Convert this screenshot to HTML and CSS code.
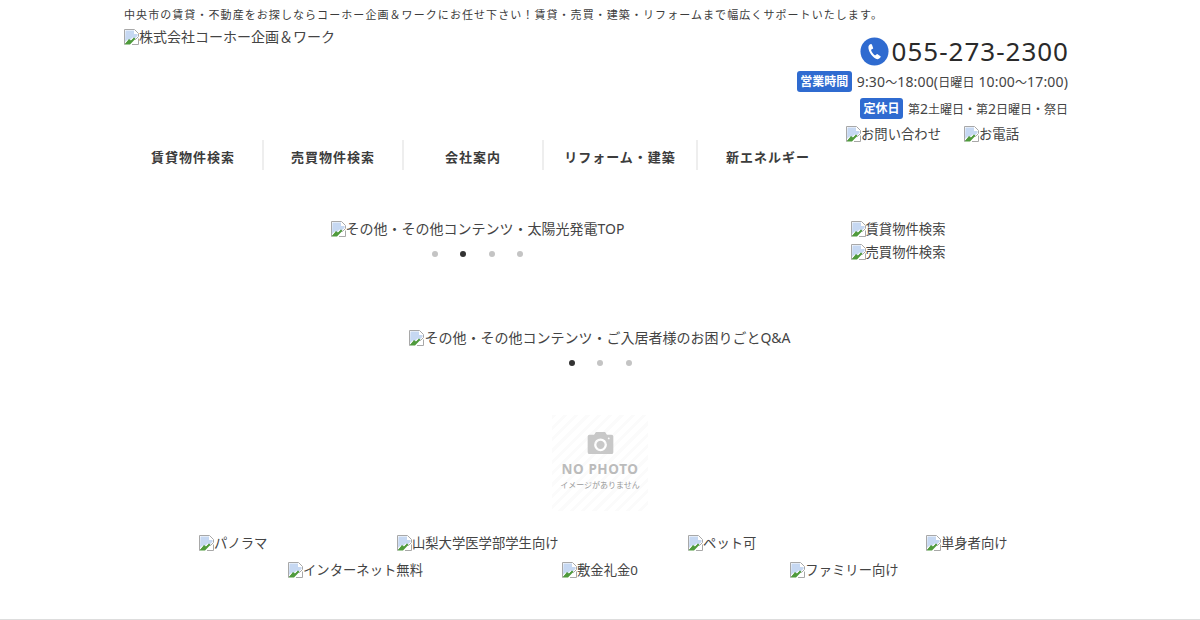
FILE: index.html
```html
<!DOCTYPE html>
<html lang="ja">
<head>
<meta charset="utf-8">
<title>株式会社コーホー企画＆ワーク</title>
<link rel="stylesheet" href="styles.css">
</head>
<body>
<svg class="defs" width="0" height="0" aria-hidden="true">
  <symbol id="broken" viewBox="0 0 16 16">
    <path d="M.5.5h10l4 4v3l-3 3-2-1-3 3-2-1-4 4z" fill="#fff" stroke="#a8a8a8"/>
    <path d="M1.500 1.500h8.500v3.500h3.500v2l-3 2.600-2-1-3 3-2-1-2.500 2.500z" fill="#c6d8f2"/>
    <path d="M1 15l4-5 2 1.500 3-3 1.500 1.200L6 15.500H1z" fill="#4f9b3c"/>
    <path d="M14.500 9.500v6H8" fill="none" stroke="#a8a8a8"/>
  </symbol>
</svg>
<header class="header">
  <h1 class="tagline">中央市の賃貸・不動産をお探しならコーホー企画＆ワークにお任せ下さい！賃貸・売買・建築・リフォームまで幅広くサポートいたします。</h1>
  <div class="head-main">
    <a class="alt logo"><svg class="bi"><use href="#broken"/></svg>株式会社コーホー企画＆ワーク</a>
    <div class="contact">
      <div class="tel">
        <svg class="tel-icon" viewBox="0 0 30 30"><circle cx="15" cy="15" r="14.500" fill="#2f6bd0"/><path d="M11.300 7.200c-.7.100-2.400 1.200-2.600 3-.3 2.800 1.400 6 3 8.200 1.700 2.300 4.500 4.700 6.700 4.500 1.300-.1 2.700-1.400 3-2.100.1-.3.100-.6-.2-.8l-3-2.200c-.3-.2-.6-.2-.9 0l-1.300 1c-.3.200-.5.200-.8 0-1.600-1.300-3-3.200-3.700-5.200-.1-.3 0-.5.300-.7l1.500-.8c.3-.2.400-.5.300-.8l-1.300-3.600c-.1-.3-.4-.5-1-.5z" fill="#fff"/></svg>
        <span class="tel-num">055-273-2300</span>
      </div>
      <div class="info"><span class="badge">営業時間</span><span class="hours">9:30<span class="cj">〜</span>18:00(<span class="cj">日曜日</span> 10:00<span class="cj">〜</span>17:00)</span></div>
      <div class="info"><span class="badge">定休日</span><span><span class="cj">第</span>2<span class="cj">土曜日・第</span>2<span class="cj">日曜日・祭日</span></span></div>
      <div class="mini">
        <a class="alt"><svg class="bi"><use href="#broken"/></svg>お問い合わせ</a>
        <a class="alt"><svg class="bi"><use href="#broken"/></svg>お電話</a>
      </div>
    </div>
  </div>
  <nav class="nav">
    <a class="cell">賃貸物件検索</a>
    <a class="cell">売買物件検索</a>
    <a class="cell">会社案内</a>
    <a class="cell wide">リフォーム・建築</a>
    <a class="cell last">新エネルギー</a>
  </nav>
</header>
<main>
  <section class="hero">
    <div class="slider">
      <a class="alt"><svg class="bi"><use href="#broken"/></svg>その他・その他コンテンツ・太陽光発電TOP</a>
      <div class="dots"><i></i><i class="on"></i><i></i><i></i></div>
    </div>
    <div class="side">
      <a class="alt"><svg class="bi"><use href="#broken"/></svg>賃貸物件検索</a>
      <a class="alt"><svg class="bi"><use href="#broken"/></svg>売買物件検索</a>
    </div>
  </section>
  <section class="slider second">
    <a class="alt"><svg class="bi"><use href="#broken"/></svg>その他・その他コンテンツ・ご入居者様のお困りごとQ&amp;A</a>
    <div class="dots"><i class="on"></i><i></i><i></i></div>
  </section>
  <section class="nophoto-wrap">
    <div class="nophoto">
      <svg class="camera" viewBox="0 0 28 24"><path fill-rule="evenodd" d="M2 3h5l2-3h10l2 3h5a2 2 0 0 1 2 2v17a2 2 0 0 1-2 2H2a2 2 0 0 1-2-2V5a2 2 0 0 1 2-2zm12 4a7 7 0 1 0 0 14 7 7 0 0 0 0-14zm0 2.500a4.500 4.500 0 1 1 0 9 4.500 4.500 0 0 1 0-9zM23 6a1 1 0 1 0 0 2 1 1 0 0 0 0-2z" fill="#c8c8c8"/></svg>
      <span class="np-title">NO PHOTO</span>
      <span class="np-sub">イメージがありません</span>
    </div>
  </section>
  <section class="tags">
    <a class="alt tag"><svg class="bi"><use href="#broken"/></svg>パノラマ</a>
    <a class="alt tag"><svg class="bi"><use href="#broken"/></svg>山梨大学医学部学生向け</a>
    <a class="alt tag"><svg class="bi"><use href="#broken"/></svg>ペット可</a>
    <a class="alt tag"><svg class="bi"><use href="#broken"/></svg>単身者向け</a>
    <a class="alt tag"><svg class="bi"><use href="#broken"/></svg>インターネット無料</a>
    <a class="alt tag"><svg class="bi"><use href="#broken"/></svg>敷金礼金0</a>
    <a class="alt tag"><svg class="bi"><use href="#broken"/></svg>ファミリー向け</a>
  </section>
</main>
<footer class="foot"></footer>
</body>
</html>
```

FILE: styles.css
```css
* { box-sizing: border-box; }
html, body { margin: 0; padding: 0; }
body {
  height: 620px;
  overflow: hidden;
  background: #fff;
  color: #3c3c3c;
  font-family: "Noto Sans", "Noto Sans CJK JP", sans-serif;
  font-size: 14px;
  display: flex;
  flex-direction: column;
}
.defs { position: absolute; }
.alt { display: inline-block; line-height: 20px; white-space: nowrap; color: #444; }
.bi { width: 16px; height: 16px; vertical-align: -3px; margin-right: -1px; }
.header { width: 944px; margin-left: 124px; }
.tagline { margin: 0; font-size: 11px; font-weight: 400; letter-spacing: 1.07px; line-height: 16px; padding-top: 7px; height: 23px; white-space: nowrap; color: #3c3c3c; }
.head-main { display: flex; justify-content: space-between; align-items: flex-start; }
.logo { margin-top: 4px; }
.contact { display: flex; flex-direction: column; align-items: flex-end; padding-top: 14px; }
.tel { display: flex; align-items: center; gap: 3px; height: 30px; margin-right: -1px; }
.tel-icon { width: 29px; height: 29px; margin-top: -1px; }
.tel-num { font-size: 26px; letter-spacing: 1px; line-height: 30px; padding-bottom: 2px; color: #2a2a2a; }
.info { display: flex; align-items: center; gap: 5px; font-size: 14px; height: 27px; padding-top: 1px; color: #444; white-space: nowrap; }
.hours { letter-spacing: .15px; }
.cj { font-size: 12px; }
.badge { background: #2f6bd0; color: #fff; font-size: 12px; font-weight: 700; padding: 0 3.500px; height: 21px; line-height: 21px; border-radius: 3px; }
.mini { display: flex; gap: 23px; margin-right: 49px; height: 22px; margin-top: 3px; }
.mini .alt, .side .alt, .tag { font-size: 13.330px; }
.nav { display: flex; margin-top: -6px; height: 30px; }
.cell { display: block; width: 140px; text-align: center; line-height: 34px; font-size: 13px; font-weight: 700; letter-spacing: 1px; color: #3c3c3c; border-right: 2px solid #eee; white-space: nowrap; }
.wide { width: 154px; }
.last { width: 140px; border-right: 0; }
.hero { display: flex; margin-top: 49px; height: 60px; padding-left: 124px; }
.slider { display: flex; flex-direction: column; align-items: center; }
.hero .slider { width: 707px; }
.dots { display: flex; gap: 22.500px; margin-top: 12px; height: 6px; }
.dots i { width: 6px; height: 6px; border-radius: 50%; background: #c4c4c4; }
.dots i.on { background: #333; }
.side { width: 134px; display: flex; flex-direction: column; align-items: center; gap: 3px; }
.second { margin-top: 49px; }
.nophoto-wrap { display: flex; justify-content: center; margin-top: 49px; }
.nophoto {
  width: 96px; height: 96px;
  display: flex; flex-direction: column; align-items: center;
  padding-top: 17px;
  background: repeating-linear-gradient(135deg, #fbfbfb 0 3px, #fff 3px 8px);
}
.camera { width: 27px; height: 22px; }
.np-title { font-size: 13.500px; font-weight: 700; color: #bbb; line-height: 18px; margin-top: 6px; letter-spacing: .6px; white-space: nowrap; }
.np-sub { font-size: 8px; color: #999; line-height: 12px; margin-top: 1px; white-space: nowrap; }
.tags { width: 978px; margin: 19px auto 0; display: flex; flex-wrap: wrap; justify-content: center; }
.tag { width: 244.500px; height: 27px; line-height: 27px; text-align: center; }
.foot { margin-top: auto; height: 1px; background: #ddd; }
```
